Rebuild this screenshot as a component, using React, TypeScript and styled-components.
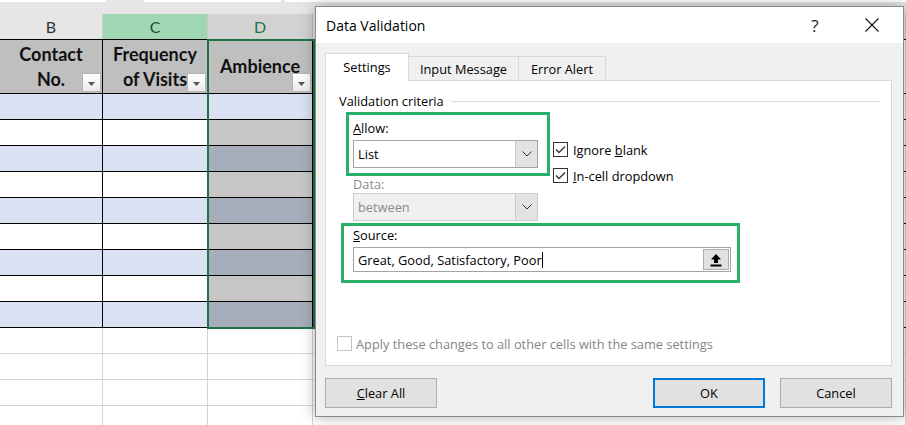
import styled, { createGlobalStyle } from 'styled-components';

const UI_FONT = `'Open Sans', 'Noto Sans', sans-serif`;
const SHEET_FONT = `Lato, 'Liberation Sans', sans-serif`;
const GREEN = '#2bb06a';

const GlobalStyle = createGlobalStyle`
  html, body { margin: 0; padding: 0; background: #fff; }
  body { overflow: hidden; }
  * { box-sizing: border-box; }
`;

const Screen = styled.div`
  position: relative;
  width: 906px;
  height: 425px;
  overflow: hidden;
  background: #fff;
`;

/* ---------- spreadsheet ---------- */

const Sheet = styled.div`
  position: relative;
  display: flex;
  flex-direction: column;
  font-family: ${SHEET_FONT};
`;

const RibbonEdge = styled.div`
  display: flex;
  height: 14px;
  background: #e6e6e6;
`;

const RibbonBit = styled.div<{ $w?: number; $gap: number }>`
  height: 2px;
  background: #fff;
  margin-left: ${p => p.$gap}px;
  ${p => (p.$w ? `width: ${p.$w}px;` : 'flex: 1;')}
`;

const Row = styled.div<{ $h: number; $line?: string; $top?: string }>`
  display: flex;
  height: ${p => p.$h}px;
  ${p => p.$line && `border-bottom: 1px solid ${p.$line};`}
  ${p => p.$top && `border-top: 1px solid ${p.$top};`}
`;

const Cell = styled.div<{ $w?: number; $bg: string; $line: string }>`
  position: relative;
  ${p => (p.$w ? `width: ${p.$w}px; flex: none;` : 'flex: 1;')}
  background: ${p => p.$bg};
  border-right: 1px solid ${p => p.$line};
`;

const ColLetter = styled(Cell)<{ $ink: string }>`
  display: flex;
  align-items: center;
  justify-content: center;
  font-size: 16px;
  color: ${p => p.$ink};
`;

const HeadCell = styled(Cell)`
  display: flex;
  flex-direction: column;
  align-items: center;
  justify-content: center;
  font-size: 18px;
  font-weight: 700;
  line-height: 25px;
  color: #111;
  text-align: center;
`;

const FilterButton = styled.div`
  position: absolute;
  right: 1px;
  bottom: 1px;
  width: 19px;
  height: 19px;
  border: 1px solid #b4b4b4;
  background: linear-gradient(#ffffff, #ececec);
  display: flex;
  align-items: center;
  justify-content: center;
  padding-top: 2px;
`;

const Selection = styled.div`
  position: absolute;
  left: 207px;
  top: 39px;
  width: 108px;
  height: 290px;
  border: 2px solid #217346;
  pointer-events: none;
`;

/* ---------- dialog ---------- */

const Dialog = styled.div`
  position: absolute;
  left: 315px;
  top: 6px;
  width: 589px;
  height: 411px;
  background: #f0f0f0;
  border: 1px solid #8a8a8a;
  box-shadow: 0 0 14px rgba(0, 0, 0, 0.3);
  display: flex;
  flex-direction: column;
  font-family: ${UI_FONT};
  font-size: 12.8px;
  color: #000;
`;

const TitleBar = styled.div`
  height: 36px;
  flex: none;
  background: #fff;
  display: flex;
  align-items: center;
  padding-left: 10px;
`;

const Title = styled.div`
  flex: 1;
  font-size: 14px;
`;

const TitleButton = styled.div`
  width: 46px;
  height: 36px;
  display: flex;
  align-items: center;
  justify-content: center;
  font-size: 17px;
  color: #222;
`;

const TitleButtons = styled.div`
  display: flex;
  gap: 11px;
  padding-right: 8px;
`;

const Body = styled.div`
  display: flex;
  flex-direction: column;
  padding: 10px 11px 0 9px;
`;

const TabStrip = styled.div`
  display: flex;
  align-items: flex-end;
  height: 28px;
  margin-bottom: -1px;
  position: relative;
  z-index: 1;
`;

const Tab = styled.div<{ $w: number; $active?: boolean }>`
  width: ${p => p.$w}px;
  height: ${p => (p.$active ? 28 : 24)}px;
  margin-bottom: ${p => (p.$active ? 0 : 1)}px;
  margin-left: -1px;
  &:first-child { margin-left: 0; }
  border: 1px solid #d9d9d9;
  border-bottom: none;
  background: ${p => (p.$active ? '#fff' : '#f0f0f0')};
  position: relative;
  z-index: ${p => (p.$active ? 2 : 1)};
  display: flex;
  align-items: center;
  justify-content: center;
  padding-bottom: ${p => (p.$active ? 2 : 0)}px;
`;

const Panel = styled.div`
  height: 286px;
  border: 1px solid #d9d9d9;
  background: #fff;
  padding: 11px 11px 0 13px;
  display: flex;
  flex-direction: column;
  align-items: flex-start;
`;

const GroupHead = styled.div`
  align-self: stretch;
  display: flex;
  align-items: center;
  gap: 7px;
  height: 18px;
`;

const GroupRule = styled.div`
  flex: 1;
  height: 1px;
  background: #dcdcdc;
`;

const AllowRow = styled.div`
  display: flex;
  align-items: flex-start;
  height: 64px;
  margin-top: 2px;
`;

const Highlight = styled.div<{ $w: number; $h: number; $pad: string }>`
  width: ${p => p.$w}px;
  height: ${p => p.$h}px;
  border: 3px solid ${GREEN};
  padding: ${p => p.$pad};
  display: flex;
  flex-direction: column;
  align-items: flex-start;
`;

const FieldLabel = styled.div<{ $disabled?: boolean; $indent?: number }>`
  line-height: 16px;
  margin-left: ${p => p.$indent ?? 0}px;
  color: ${p => (p.$disabled ? '#8c8c8c' : '#000')};
`;

const Combo = styled.div<{ $disabled?: boolean; $indent?: number }>`
  width: 185px;
  height: 28px;
  margin-top: ${p => (p.$disabled ? 1 : 4)}px;
  margin-left: ${p => p.$indent ?? 0}px;
  border: 1px solid ${p => (p.$disabled ? '#cccccc' : '#a3a3a3')};
  background: ${p => (p.$disabled ? '#f0f0f0' : '#fff')};
  color: ${p => (p.$disabled ? '#8c8c8c' : '#000')};
  display: flex;
  align-items: stretch;
`;

const ComboText = styled.div`
  flex: 1;
  display: flex;
  align-items: center;
  padding-left: 4px;
`;

const ComboArrow = styled.div`
  width: 22px;
  background: #e3e3e3;
  border-left: 1px solid #c9c9c9;
  display: flex;
  align-items: center;
  justify-content: center;
`;

const CheckColumn = styled.div`
  display: flex;
  flex-direction: column;
  gap: 11px;
  margin-left: 3px;
  padding-top: 30px;
`;

const CheckRow = styled.div<{ $disabled?: boolean }>`
  display: flex;
  align-items: center;
  gap: 5px;
  height: 15px;
  color: ${p => (p.$disabled ? '#858585' : '#000')};
`;

const Box = styled.div<{ $disabled?: boolean }>`
  width: 15px;
  height: 15px;
  flex: none;
  border: 1px solid ${p => (p.$disabled ? '#c4c4c4' : '#333')};
  background: #fff;
  display: flex;
  align-items: center;
  justify-content: center;
`;

const SourceInput = styled.div`
  width: 378px;
  height: 25px;
  margin-top: 4px;
  border: 1px solid #a3a3a3;
  background: #fff;
  display: flex;
  align-items: stretch;
`;

const SourceText = styled.div`
  flex: 1;
  display: flex;
  align-items: center;
  padding-left: 4px;
`;

const Caret = styled.span`
  display: inline-block;
  width: 1px;
  height: 16px;
  background: #000;
`;

const PickButton = styled.div`
  width: 26px;
  margin: 1px;
  background: #e1e1e1;
  border: 1px solid #adadad;
  display: flex;
  align-items: center;
  justify-content: center;
`;

const ApplyRow = styled(CheckRow)`
  margin-top: 53px;
  margin-left: -2px;
  gap: 4px;
`;

const Buttons = styled.div`
  display: flex;
  justify-content: space-between;
  margin-top: 12px;
`;

const ButtonGroup = styled.div`
  display: flex;
  gap: 15px;
`;

const Button = styled.div<{ $primary?: boolean }>`
  width: 112px;
  height: 30px;
  background: #e1e1e1;
  border: ${p => (p.$primary ? '2px solid #0078d7' : '1px solid #adadad')};
  display: flex;
  align-items: center;
  justify-content: center;
`;

/* ---------- icons ---------- */

const FilterArrow = () => (
  <svg width="7" height="4" viewBox="0 0 7 4">
    <path d="M0 0 H7 L3.5 4 Z" fill="#555" />
  </svg>
);

const Chevron = () => (
  <svg width="10" height="6" viewBox="0 0 10 6">
    <polyline points="0.5,0.5 5,5 9.5,0.5" fill="none" stroke="#333" strokeWidth="1" />
  </svg>
);

const Tick = () => (
  <svg width="13" height="13" viewBox="0 0 13 13">
    <polyline points="2,6.5 5,9.5 11,3.5" fill="none" stroke="#333" strokeWidth="1.3" />
  </svg>
);

const CloseIcon = () => (
  <svg width="14" height="14" viewBox="0 0 14 14">
    <path d="M0.5 0.5 L13.5 13.5 M13.5 0.5 L0.5 13.5" stroke="#111" strokeWidth="1.1" />
  </svg>
);

const UploadIcon = () => (
  <svg width="12" height="14" viewBox="0 0 12 14">
    <path d="M6 1 L11 6.5 H8 V10 H4 V6.5 H1 Z" fill="#000" />
    <rect x="0.5" y="11.5" width="11" height="2" fill="#000" />
  </svg>
);

/* ---------- data ---------- */

const COLS = [103, 105, 105];
const BLUE = '#d9e1f2';
const SEL_BLUE = '#a6aebb';
const SEL_WHITE = '#c6c6c6';

const dataRows = Array.from({ length: 9 }, (_, i) => i % 2 === 0);
const emptyRows = [0, 1, 2, 3];

const App = () => {
  return (
    <Screen>
      <GlobalStyle />
      <Sheet>
        <RibbonEdge>
          <RibbonBit $gap={0} $w={106} />
          <RibbonBit $gap={38} $w={137} />
          <RibbonBit $gap={4} />
        </RibbonEdge>

        <Row $h={25}>
          <ColLetter $w={COLS[0]} $bg="#e6e6e6" $line="#d0d0d0" $ink="#333">B</ColLetter>
          <ColLetter $w={COLS[1]} $bg="#a0d6b4" $line="#c8c8c8" $ink="#1f4e35">C</ColLetter>
          <ColLetter $w={COLS[2]} $bg="#d2d2d2" $line="#bdbdbd" $ink="#217346">D</ColLetter>
          <ColLetter $bg="#e6e6e6" $line="#d0d0d0" $ink="#333">E</ColLetter>
        </Row>

        <Row $h={55} $top="#000" $line="#000">
          <HeadCell $w={COLS[0]} $bg="#bfbfbf" $line="#000">
            <span>Contact</span>
            <span>No.</span>
            <FilterButton><FilterArrow /></FilterButton>
          </HeadCell>
          <HeadCell $w={COLS[1]} $bg="#bfbfbf" $line="#000">
            <span>Frequency</span>
            <span>of Visits</span>
            <FilterButton><FilterArrow /></FilterButton>
          </HeadCell>
          <HeadCell $w={COLS[2]} $bg="#bfbfbf" $line="#000">
            <span>Ambience</span>
            <FilterButton><FilterArrow /></FilterButton>
          </HeadCell>
          <Cell $bg="#fff" $line="#d4d4d4" />
        </Row>

        {dataRows.map((blue, i) => (
          <Row key={i} $h={26} $line="#000">
            <Cell $w={COLS[0]} $bg={blue ? BLUE : '#fff'} $line="#000" />
            <Cell $w={COLS[1]} $bg={blue ? BLUE : '#fff'} $line="#000" />
            <Cell
              $w={COLS[2]}
              $bg={i === 0 ? BLUE : blue ? SEL_BLUE : SEL_WHITE}
              $line="#000"
            />
            <Cell $bg="#fff" $line="#d4d4d4" />
          </Row>
        ))}

        {emptyRows.map(i => (
          <Row key={`e${i}`} $h={26} $line="#d4d4d4">
            <Cell $w={COLS[0]} $bg="#fff" $line="#d4d4d4" />
            <Cell $w={COLS[1]} $bg="#fff" $line="#d4d4d4" />
            <Cell $w={COLS[2]} $bg="#fff" $line="#d4d4d4" />
            <Cell $bg="#fff" $line="#d4d4d4" />
          </Row>
        ))}

        <Selection />
      </Sheet>

      <Dialog>
        <TitleBar>
          <Title>Data Validation</Title>
          <TitleButtons>
            <TitleButton>?</TitleButton>
            <TitleButton><CloseIcon /></TitleButton>
          </TitleButtons>
        </TitleBar>

        <Body>
          <TabStrip>
            <Tab $w={84} $active>Settings</Tab>
            <Tab $w={111}>Input Message</Tab>
            <Tab $w={88}>Error Alert</Tab>
          </TabStrip>

          <Panel>
            <GroupHead>
              <span>Validation criteria</span>
              <GroupRule />
            </GroupHead>

            <AllowRow>
              <Highlight $w={204} $h={64} $pad="5px 0 0 4px" style={{ marginLeft: 7 }}>
                <FieldLabel><u>A</u>llow:</FieldLabel>
                <Combo>
                  <ComboText>List</ComboText>
                  <ComboArrow><Chevron /></ComboArrow>
                </Combo>
              </Highlight>
              <CheckColumn>
                <CheckRow>
                  <Box><Tick /></Box>
                  <span>Ignore <u>b</u>lank</span>
                </CheckRow>
                <CheckRow>
                  <Box><Tick /></Box>
                  <span><u>I</u>n-cell dropdown</span>
                </CheckRow>
              </CheckColumn>
            </AllowRow>

            <FieldLabel $disabled $indent={14}>Data:</FieldLabel>
            <Combo $disabled $indent={14}>
              <ComboText>between</ComboText>
              <ComboArrow><Chevron /></ComboArrow>
            </Combo>

            <Highlight $w={399} $h={60} $pad="1px 0 0 9px" style={{ marginTop: 2, marginLeft: 2 }}>
              <FieldLabel><u>S</u>ource:</FieldLabel>
              <SourceInput>
                <SourceText>
                  Great, Good, Satisfactory, Poor<Caret />
                </SourceText>
                <PickButton><UploadIcon /></PickButton>
              </SourceInput>
            </Highlight>

            <ApplyRow $disabled>
              <Box $disabled />
              <span>Apply these changes to all other cells with the same settings</span>
            </ApplyRow>
          </Panel>

          <Buttons>
            <Button><span><u>C</u>lear All</span></Button>
            <ButtonGroup>
              <Button $primary>OK</Button>
              <Button>Cancel</Button>
            </ButtonGroup>
          </Buttons>
        </Body>
      </Dialog>
    </Screen>
  );
};

export default App;
